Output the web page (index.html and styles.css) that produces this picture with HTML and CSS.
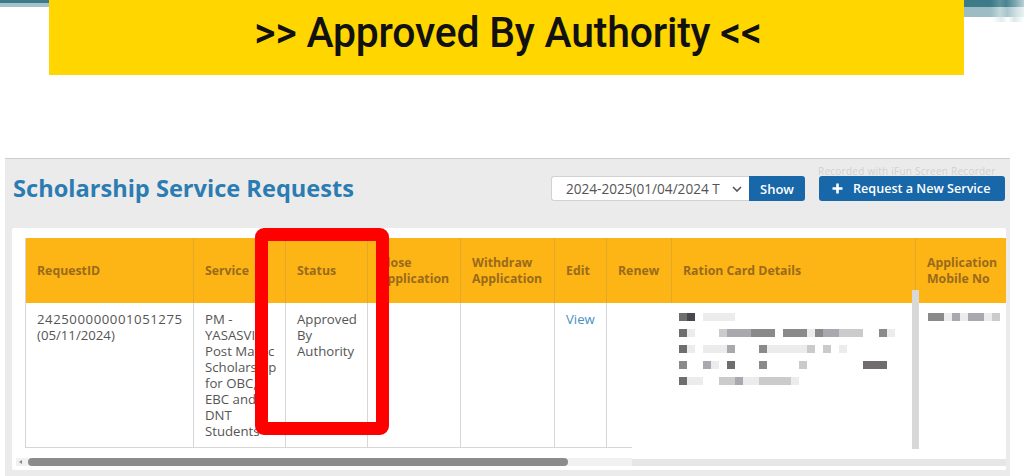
FILE: index.html
```html
<!DOCTYPE html>
<html>
<head>
<meta charset="utf-8">
<link rel="stylesheet" href="styles.css">
</head>
<body>
<div class="top">
  <div class="deco deco-left"><div class="st-dark"></div><div class="st-light"></div></div>
  <div class="banner"><span class="banner-text">&gt;&gt; Approved By Authority &lt;&lt;</span></div>
  <div class="deco deco-right"><div class="st-dark"></div><div class="st-light"></div><div class="st-fade"></div></div>
</div>

<div class="panel">
  <div class="watermark">Recorded with iFun Screen Recorder</div>
  <div class="panel-head">
    <h1 class="title">Scholarship Service Requests</h1>
    <div class="controls">
      <div class="year-select">
        <span>2024-2025(01/04/2024 T</span>
        <svg class="chev" width="10" height="6" viewBox="0 0 10 6"><path d="M1 1l4 4 4-4" fill="none" stroke="#555" stroke-width="1.6"/></svg>
      </div>
      <button class="btn btn-show">Show</button>
      <button class="btn btn-new">
        <svg width="11" height="11" viewBox="0 0 11 11"><path d="M5.5 0.5v10M0.5 5.5h10" stroke="#fff" stroke-width="2.6"/></svg>
        <span>Request a New Service</span>
      </button>
    </div>
  </div>

  <div class="card">
    <div class="table">
      <div class="th">RequestID</div>
      <div class="th">Service</div>
      <div class="th">Status</div>
      <div class="th">Close<br>Application</div>
      <div class="th">Withdraw<br>Application</div>
      <div class="th">Edit</div>
      <div class="th">Renew</div>
      <div class="th">Ration Card Details</div>
      <div class="th">Application<br>Mobile No</div>

      <div class="td"><span class="reqid">242500000001051275</span><br>(05/11/2024)</div>
      <div class="td">PM -<br>YASASVI<br>Post Matric<br>Scholarship<br>for OBC,<br>EBC and<br>DNT<br>Students</div>
      <div class="td">Approved<br>By<br>Authority</div>
      <div class="td"></div>
      <div class="td"></div>
      <div class="td"><a class="link" href="#">View</a></div>
      <div class="td"></div>
      <div class="td"></div>
      <div class="td"></div>
    </div>

    <div class="hscroll">
      <span class="arrow"></span>
      <span class="thumb"></span>
    </div>

    <div class="redact">
      <div class="redact-bar"></div>
      <div class="pix-group">
        <div class="pix-row"><i class="s5"></i><i class="s6"></i><i></i><i class="s1"></i><i class="s1"></i><i class="s1"></i><i class="s1"></i></div>
        <div class="pix-row"><i class="s5"></i><i class="s1"></i><i></i><i></i><i></i><i class="s2"></i><i class="s3"></i><i class="s3"></i><i class="s3"></i><i class="s4"></i><i class="s4"></i><i class="s4"></i><i></i><i class="s4"></i><i class="s4"></i><i class="s4"></i><i class="s1"></i><i class="s4"></i><i class="s3"></i><i class="s3"></i><i class="s2"></i><i class="s2"></i><i class="s2"></i><i></i><i></i><i class="s4"></i><i class="s1"></i></div>
        <div class="pix-row"><i class="s5"></i><i class="s1"></i><i></i><i class="s1"></i><i class="s1"></i><i class="s1"></i><i class="s3"></i><i></i><i></i><i></i><i class="s4"></i><i class="s1"></i><i class="s1"></i><i class="s1"></i><i class="s1"></i><i class="s1"></i><i class="s2"></i><i></i><i class="s2"></i><i></i><i class="s1"></i></div>
        <div class="pix-row"><i class="s4"></i><i></i><i></i><i class="s3"></i><i class="s1"></i><i></i><i class="s5"></i><i></i><i></i><i></i><i class="s4"></i><i></i><i></i><i></i><i></i><i class="s2"></i><i></i><i></i><i></i><i></i><i></i><i></i><i></i><i class="s5"></i><i class="s5"></i><i class="s5"></i></div>
        <div class="pix-row"><i class="s5"></i><i class="s1"></i><i class="s1"></i><i></i><i></i><i class="s2"></i><i class="s2"></i><i class="s3"></i><i class="s1"></i><i class="s1"></i><i class="s2"></i><i class="s2"></i><i class="s2"></i><i class="s2"></i><i class="s1"></i></div>
      </div>
      <div class="pix-mobile">
        <div class="pix-row"><i class="s4"></i><i class="s4"></i><i class="s1"></i><i class="s3"></i><i class="s1"></i><i class="s3"></i><i class="s3"></i><i class="s1"></i><i class="s2"></i></div>
      </div>
      <div class="redact-bottom"></div>
    </div>

    <div class="highlight"></div>
  </div>
</div>
</body>
</html>
```

FILE: styles.css
```css
* { box-sizing: border-box; }

html, body {
  margin: 0;
  padding: 0;
  background: #ffffff;
}

body {
  width: 1024px;
  height: 476px;
  overflow: hidden;
  font-family: "Open Sans", "DejaVu Sans", sans-serif;
}

/* ---------- top slide area ---------- */
.top {
  display: flex;
  height: 158px;
  align-items: flex-start;
}

.deco {
  display: flex;
  flex-direction: column;
}

.deco-left { width: 49px; }
.deco-right { width: 60px; }

.st-dark { height: 3px; background: #3e7b88; }
.st-light { height: 4px; background: #a3c2c9; }

.deco-right .st-dark { height: 7px; background: linear-gradient(90deg, #3e7b88 0%, #3e7b88 45%, #5f939e 60%, #4a838f 70%, #7aa6b0 85%, #b9d1d6 100%); }
.deco-right .st-light { height: 10px; background: linear-gradient(90deg, #9dbdc5 0%, #9dbdc5 45%, #c2d7dc 60%, #a8c5cc 72%, #d2e2e5 88%, #e8f0f2 100%); }
.deco-right .st-fade { height: 5px; margin-left: 28px; background: linear-gradient(90deg, #ffffff 0%, #e1ecee 30%, #ffffff 50%, #dbe8eb 70%, #ffffff 100%); }

.banner {
  width: 915px;
  height: 75px;
  background: #ffd600;
  display: flex;
  align-items: center;
  justify-content: center;
}

.banner-text {
  display: inline-block;
  font-family: Roboto, "Liberation Sans", sans-serif;
  font-weight: 500;
  font-size: 43px;
  color: #111111;
  letter-spacing: -0.2px;
  transform: scaleX(0.95);
  margin-top: -12px;
  margin-left: 2px;
  white-space: nowrap;
}

/* ---------- panel ---------- */
.panel {
  position: relative;
  margin-left: 5px;
  width: 1005px;
  height: 318px;
  background: #ebebeb;
  border-top: 1px solid #cdcdcd;
  padding: 17px 5px 0 8px;
}

.watermark {
  position: absolute;
  top: 7px;
  left: 813px;
  font-size: 10px;
  line-height: 10px;
  letter-spacing: 0.25px;
  color: #d0d0d0;
  white-space: nowrap;
}

.panel-head {
  display: flex;
  align-items: center;
  justify-content: space-between;
  height: 25px;
}

.title {
  margin: 0;
  font-size: 23.6px;
  font-weight: 700;
  color: #2b7cb2;
  margin-top: -1px;
}

.controls {
  display: flex;
  align-items: center;
  height: 25px;
}

.year-select {
  width: 198px;
  height: 25px;
  background: #ffffff;
  border: 1px solid #d2d2d2;
  border-right: none;
  border-radius: 3px 0 0 3px;
  display: flex;
  align-items: center;
  justify-content: space-between;
  padding: 0 7px 0 14px;
  font-size: 13.6px;
  color: #555555;
  white-space: nowrap;
}

.chev { flex: none; margin-top: 1px; }

.btn {
  height: 25px;
  border: none;
  background: #1767a9;
  color: #ffffff;
  font-family: "Open Sans", "DejaVu Sans", sans-serif;
  font-weight: 600;
  font-size: 13px;
  display: flex;
  align-items: center;
  padding: 0;
  cursor: pointer;
}

.btn-show {
  width: 56px;
  justify-content: center;
  border-radius: 0 3px 3px 0;
}

.btn-new {
  width: 186px;
  margin-left: 14px;
  border-radius: 3px;
  padding-left: 13px;
  gap: 10px;
  font-size: 12.6px;
}

/* ---------- card + table ---------- */
.card {
  position: relative;
  margin-top: 27px;
  margin-left: -1px;
  width: 994px;
  height: 242px;
  background: #ffffff;
  border-radius: 2px;
  padding: 10px 0 0 4px;
  overflow: hidden;
}

.table {
  display: grid;
  grid-template-columns: 168px 92px 82px 93px 94px 52px 65px 244px 120px;
  grid-template-rows: 65px 145px;
  margin-left: 9px;
  width: 1010px;
  border-left: 1px solid #d6d6d6;
}

.th {
  background: #fdb515;
  color: #9a6a1c;
  font-weight: 700;
  font-size: 12.3px;
  line-height: 16px;
  padding-left: 11px;
  display: flex;
  align-items: center;
  border-right: 1px solid #e2a82c;
  white-space: nowrap;
}

.td {
  font-size: 13.2px;
  line-height: 16px;
  color: #555555;
  padding: 8px 0 0 11px;
  border-right: 1px solid #d6d6d6;
  border-bottom: 1px solid #d6d6d6;
  white-space: nowrap;
}

.reqid { letter-spacing: 0.55px; }

.link {
  color: #4a8fc3;
  text-decoration: none;
}

.hscroll {
  position: relative;
  height: 8px;
  margin-top: 10px;
  width: 620px;
  background: #f1f1f1;
}

.arrow {
  position: absolute;
  left: 3px;
  top: 2px;
  width: 0;
  height: 0;
  border-top: 2px solid transparent;
  border-bottom: 2px solid transparent;
  border-right: 3px solid #888;
}

.thumb {
  position: absolute;
  left: 12px;
  top: 0;
  width: 540px;
  height: 8px;
  border-radius: 4px;
  background: #8c8c8c;
}

/* redaction overlay (lies over the table) */
.redact {
  position: absolute;
  left: 620px;
  top: 75px;
  right: 0;
  bottom: 0;
  background: #ffffff;
}

.redact-bar {
  position: absolute;
  left: 280px;
  top: -13px;
  width: 7px;
  height: 159px;
  background: #d8d8d8;
}

.redact::before {
  content: "";
  position: absolute;
  left: 287px;
  top: -13px;
  right: 0;
  height: 13px;
  background: #fdb515;
}

.pix-group {
  position: absolute;
  left: 47px;
  top: 10px;
  display: flex;
  flex-direction: column;
  gap: 8px;
}

.pix-mobile {
  position: absolute;
  left: 296px;
  top: 10px;
}

.pix-row {
  display: flex;
  height: 8px;
}

.pix-row i {
  display: block;
  width: 8px;
  height: 8px;
}

.s1 { background: #ececec; }
.s2 { background: #cbcbcb; }
.s3 { background: #a9a9ad; }
.s4 { background: #8a8a8a; }
.s5 { background: #6f6d6d; }
.s6 { background: #47484b; }

.redact-bottom {
  position: absolute;
  left: 0;
  right: 0;
  bottom: 4px;
  height: 7px;
  background: #e6e6e6;
}

/* red highlight frame */
.highlight {
  position: absolute;
  left: 243px;
  top: 0;
  width: 134px;
  height: 207px;
  border: 13px solid #ff0000;
  border-radius: 9px;
}
```
